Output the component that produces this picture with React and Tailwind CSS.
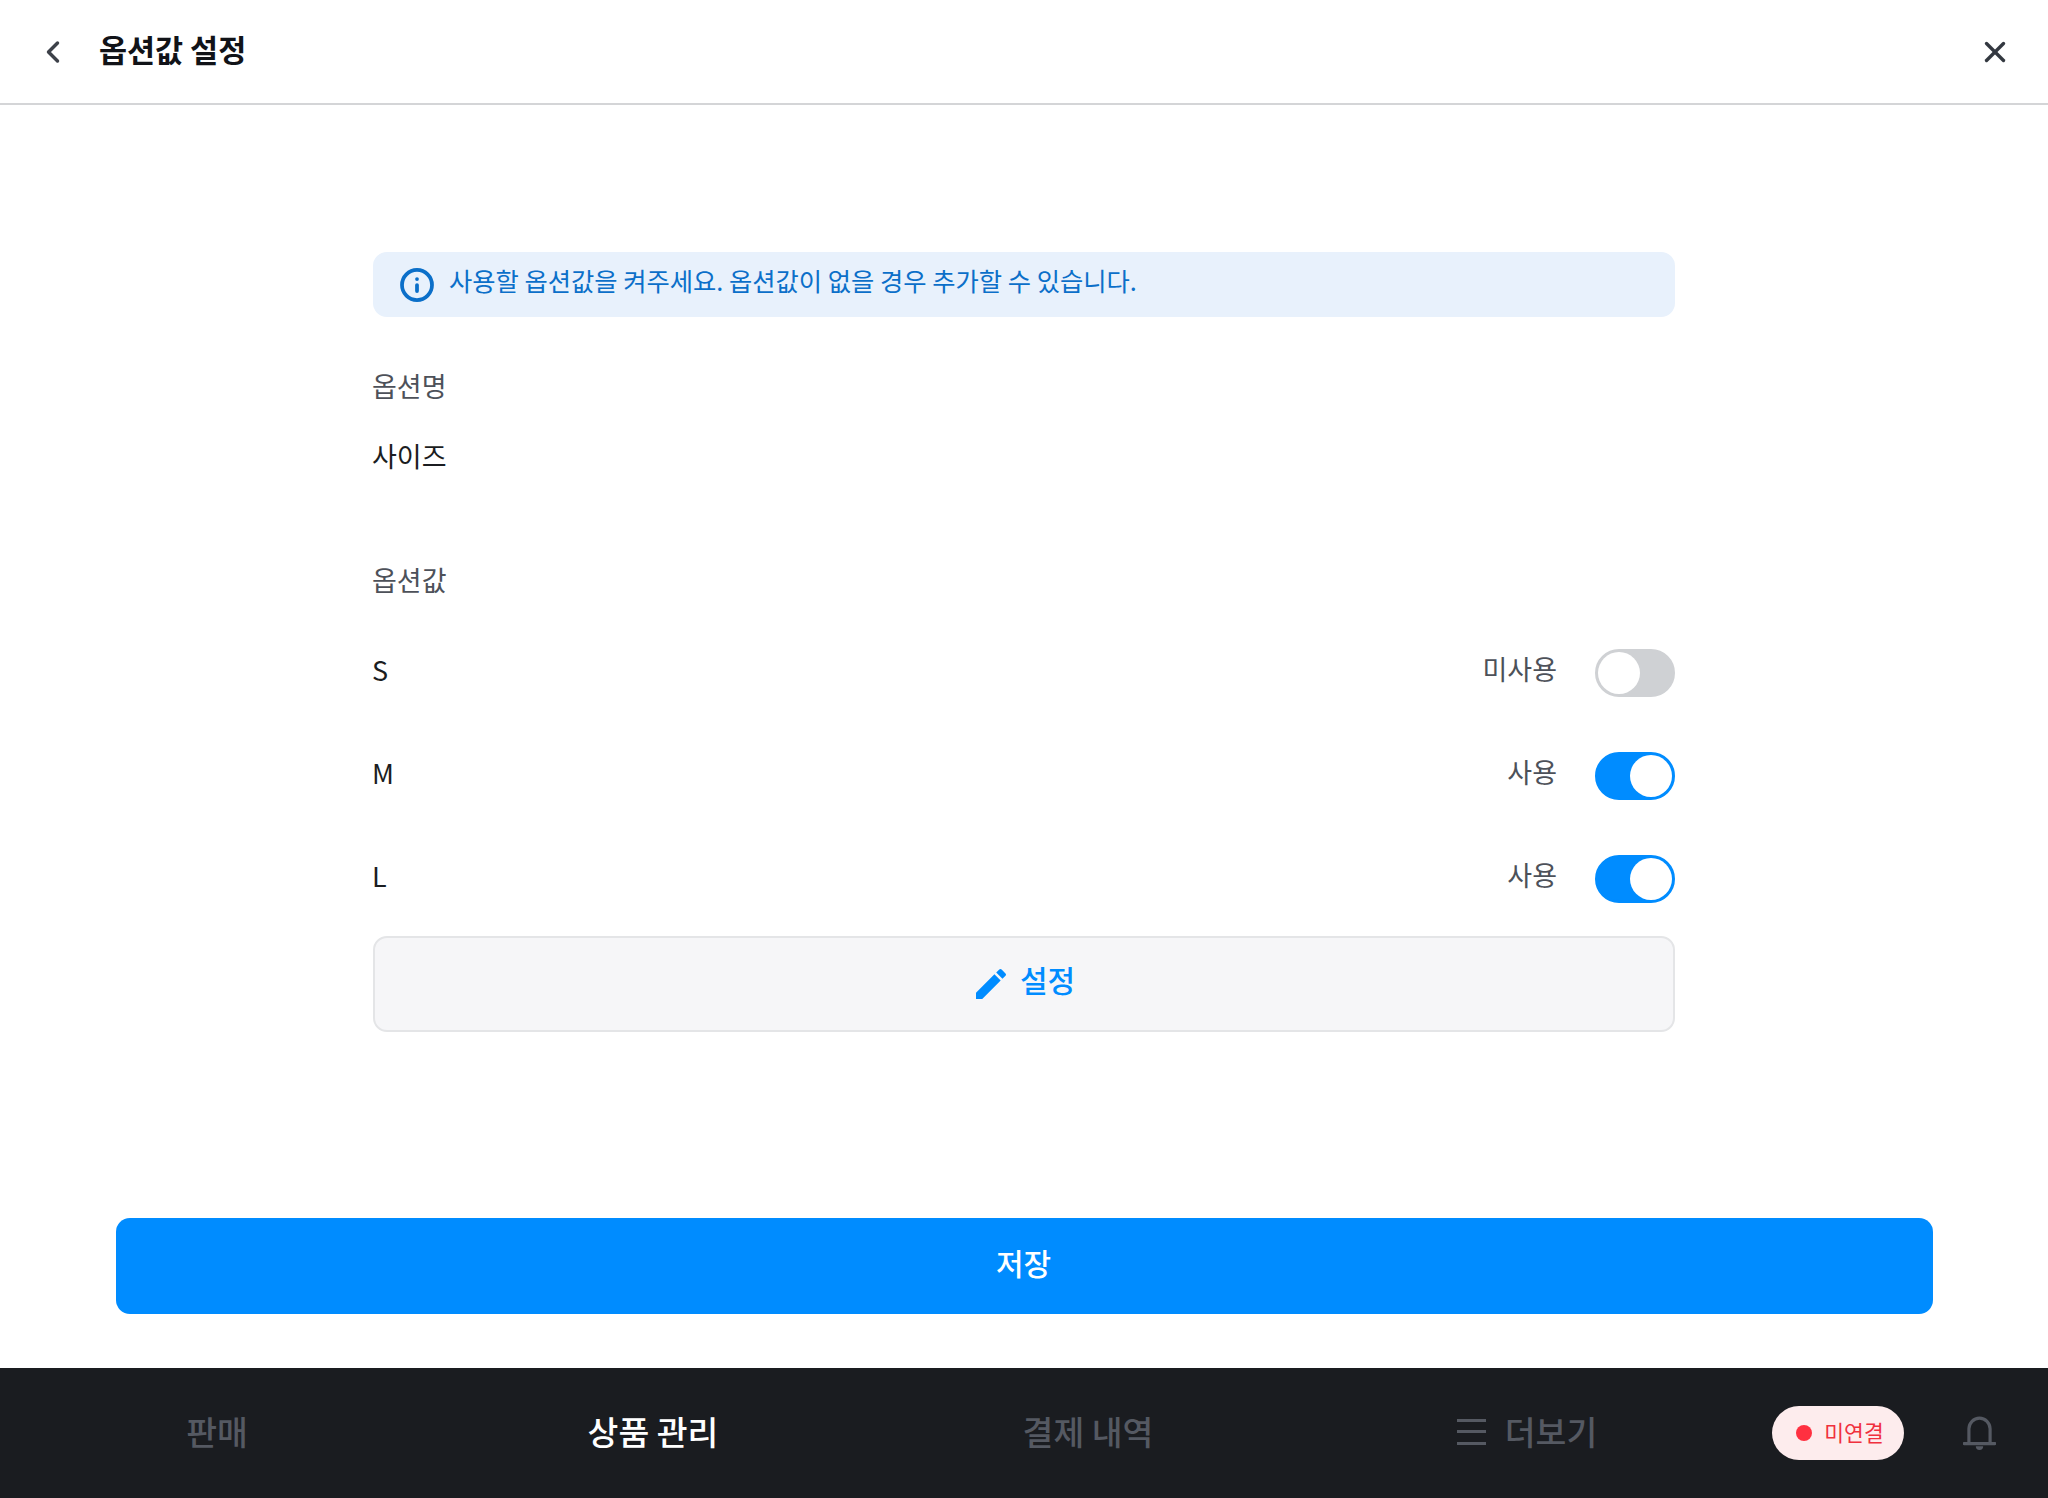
import { ChevronLeft, X, Info } from 'lucide-react';
import { MdEdit } from 'react-icons/md';

const font = { fontFamily: '"Noto Sans CJK KR", "Noto Sans", sans-serif' };

const options = [
  { name: 'S', on: false },
  { name: 'M', on: true },
  { name: 'L', on: true },
];

const Toggle = ({ on }) => (
  <div
    className={`flex h-[48px] w-[80px] items-center rounded-full border-[3px] ${
      on ? 'justify-end border-[#008cff] bg-[#008cff]' : 'justify-start border-[#cfd1d4] bg-[#cfd1d4]'
    }`}
  >
    <div className="h-[42px] w-[42px] rounded-full bg-white" />
  </div>
);

const OptionRow = ({ name, on }) => (
  <div className="flex h-[103px] items-center justify-between">
    <span className="-ml-[1px] pb-[5px] text-[27px] text-[#1b1d21]">{name}</span>
    <div className="flex items-center gap-[38px]">
      <span className="pb-[6px] text-[27px] text-[#4d5159]">{on ? '사용' : '미사용'}</span>
      <Toggle on={on} />
    </div>
  </div>
);

const BellIcon = () => (
  <svg width="33" height="36" viewBox="0 0 31 34" fill="none" stroke="#555962" strokeWidth="3" className="ml-[59px]">
    <path d="M5.5 26V13a10 10 0 0 1 20 0v13" />
    <path d="M1 27h29" strokeLinecap="round" />
    <path d="M12 29.5h7a3.5 3.5 0 0 1-7 0z" fill="#555962" stroke="none" />
  </svg>
);

const App = () => {
  return (
    <div className="flex h-[1498px] w-full flex-col bg-white" style={font}>
      <header className="flex h-[105px] items-center justify-between border-b-2 border-[#d4d5d7] pl-[35px] pr-[36px]">
        <div className="flex items-center gap-[28px]">
          <ChevronLeft className="h-[36px] w-[36px] text-[#3d4149]" strokeWidth={2.3} />
          <h1 className="pb-[4px] text-[30.5px] font-bold text-[#111318]">옵션값 설정</h1>
        </div>
        <X className="h-[34px] w-[34px] text-[#333840]" strokeWidth={2.4} />
      </header>

      <main className="flex flex-1 flex-col items-center pt-[147px]">
        <section className="w-[1302px]">
          <div className="flex h-[65px] items-center gap-[14px] rounded-[14px] bg-[#e8f1fc] pl-[26px] text-[25.3px] text-[#0b6fc9]">
            <Info className="h-[36px] w-[36px]" strokeWidth={2.5} />
            <span className="pb-[7px]">사용할 옵션값을 켜주세요. 옵션값이 없을 경우 추가할 수 있습니다.</span>
          </div>

          <p className="-ml-[1px] mt-[49px] text-[27px] leading-[40px] text-[#4d5159]">옵션명</p>
          <p className="-ml-[1px] mt-[30px] text-[27px] leading-[40px] text-[#1b1d21]">사이즈</p>
          <p className="-ml-[1px] mt-[84px] text-[27px] leading-[40px] text-[#4d5159]">옵션값</p>

          <div className="mt-[21px]">
            {options.map((option) => (
              <OptionRow key={option.name} name={option.name} on={option.on} />
            ))}
          </div>

          <button className="mt-[6px] flex h-[96px] w-full items-center justify-center gap-[9px] rounded-[14px] border-2 border-[#e4e5e7] bg-[#f6f6f8] text-[30px] font-medium text-[#008cff]">
            <MdEdit className="-ml-[2px] h-[40px] w-[40px]" />
            <span className="pb-[10px]">설정</span>
          </button>
        </section>

        <div className="mt-auto w-full pb-[54px] pl-[116px] pr-[115px]">
          <button className="h-[96px] w-full rounded-[14px] bg-[#008cff] pb-[8px] pr-[2px] text-[30px] font-medium text-white">
            저장
          </button>
        </div>
      </main>

      <footer className="flex h-[130px] items-center bg-[#1a1c20] text-[33.5px] font-medium text-[#555962]">
        <div className="grid w-[1744px] grid-cols-4 pb-[3px] text-center">
          <span className="pr-[2px]">판매</span>
          <span className="pr-[2px] text-white">상품 관리</span>
          <span className="pr-[4px]">결제 내역</span>
          <span className="flex items-center justify-center gap-[19px] pl-[2px]">
            <span className="flex h-[26px] w-[29px] flex-col justify-between">
              <span className="h-[3px] bg-[#555962]" />
              <span className="h-[3px] bg-[#555962]" />
              <span className="h-[3px] bg-[#555962]" />
            </span>
            더보기
          </span>
        </div>
        <div className="ml-[28px] flex h-[54px] w-[132px] items-center justify-center gap-[12px] rounded-full bg-[#fdeced] pl-[4px] text-[21.5px] font-normal text-[#f0303e]">
          <span className="h-[16px] w-[16px] rounded-full bg-[#ff3040]" />
          <span className="pb-[2px]">미연결</span>
        </div>
        <BellIcon />
      </footer>
    </div>
  );
};

export default App;
